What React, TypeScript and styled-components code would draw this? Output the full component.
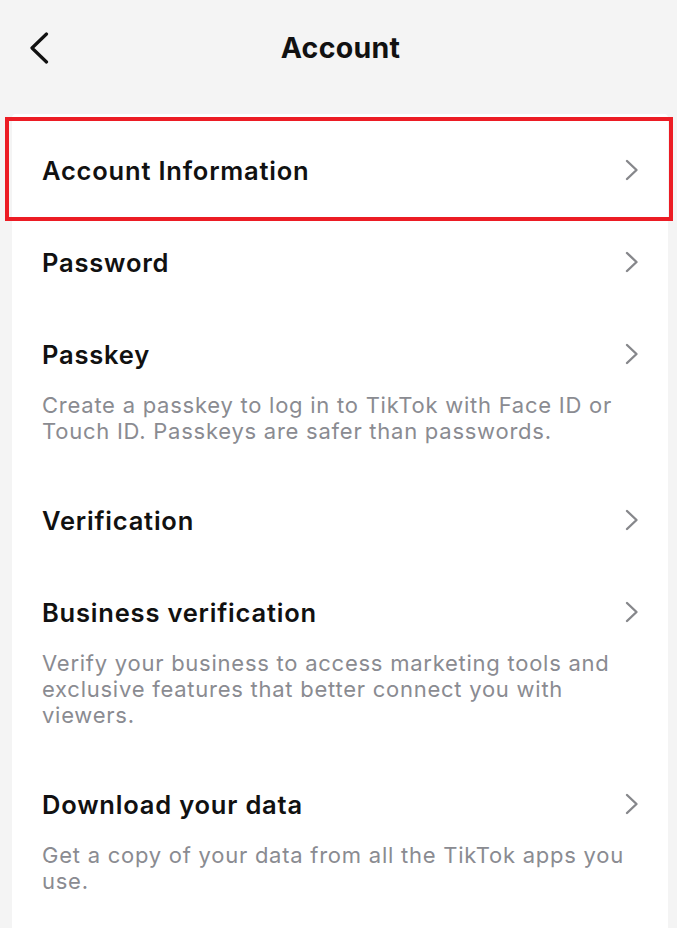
import React from 'react'
import styled, { createGlobalStyle } from 'styled-components'

const GlobalStyle = createGlobalStyle`
  html, body {
    margin: 0;
    padding: 0;
    background: #f4f4f4;
  }
  body {
    font-family: Inter, "Noto Sans", "Liberation Sans", sans-serif;
    color: #161823;
  }
`

type Item = {
  title: string
  desc?: string
  highlighted?: boolean
}

const items: Item[] = [
  { title: 'Account Information', highlighted: true },
  { title: 'Password' },
  {
    title: 'Passkey',
    desc: 'Create a passkey to log in to TikTok with Face ID or Touch ID. Passkeys are safer than passwords.',
  },
  { title: 'Verification' },
  {
    title: 'Business verification',
    desc: 'Verify your business to access marketing tools and exclusive features that better connect you with viewers.',
  },
  {
    title: 'Download your data',
    desc: 'Get a copy of your data from all the TikTok apps you use.',
  },
]

const Chevron = () => (
  <svg width="14" height="22" viewBox="0 0 14 22" fill="none">
    <path d="M2 2 L11.5 11 L2 20" stroke="#86878b" strokeWidth="2.4" strokeLinecap="round" strokeLinejoin="round" />
  </svg>
)

const BackIcon = () => (
  <svg width="20" height="32" viewBox="0 0 20 32" fill="none">
    <path d="M17.5 2 L3 16 L17.5 30" stroke="#111" strokeWidth="3.2" strokeLinecap="round" strokeLinejoin="round" />
  </svg>
)

const App = () => {
  return (
    <Page>
      <GlobalStyle />
      <Header>
        <BackButton aria-label="Back">
          <BackIcon />
        </BackButton>
        <Title>Account</Title>
        <span />
      </Header>
      <Card>
        {items.map((item) => (
          <Row key={item.title} $highlighted={item.highlighted}>
            <RowHead>
              <RowTitle>{item.title}</RowTitle>
              <Chevron />
            </RowHead>
            {item.desc && <RowDesc>{item.desc}</RowDesc>}
          </Row>
        ))}
      </Card>
    </Page>
  )
}

export default App

const Page = styled.div`
  min-height: 928px;
  display: flex;
  flex-direction: column;
`

const Header = styled.div`
  height: 94px;
  display: grid;
  grid-template-columns: 1fr auto 1fr;
  align-items: center;
  padding: 0 25px 0 29px;
`

const BackButton = styled.button`
  border: none;
  background: none;
  padding: 0;
  width: 20px;
  height: 32px;
  display: flex;
  cursor: pointer;
  margin-top: 2px;
`

const Title = styled.h1`
  margin: 0;
  font-size: 28.5px;
  font-weight: 700;
  letter-spacing: 0.3px;
  color: #111;
`

const Card = styled.div`
  flex: 1;
  margin: 20px 9px 0 12px;
  padding-top: 10px;
  background: #fff;
  border-radius: 4px 4px 0 0;
`

const Row = styled.div<{ $highlighted?: boolean }>`
  position: relative;
  padding: 30px 29px 30px 30px;

  ${(p) =>
    p.$highlighted &&
    `
    &::after {
      content: '';
      position: absolute;
      top: -7px;
      bottom: -5px;
      left: -7px;
      right: -5px;
      border: 4px solid #ec1c24;
      pointer-events: none;
    }
  `}
`

const RowHead = styled.div`
  display: flex;
  align-items: center;
  justify-content: space-between;
  height: 32px;
`

const RowTitle = styled.div`
  font-size: 25.5px;
  font-weight: 600;
  letter-spacing: 0.8px;
  color: #111;
`

const RowDesc = styled.p`
  margin: 22px 0 0;
  font-size: 22px;
  line-height: 26px;
  letter-spacing: 0.75px;
  color: #8a8b91;
`
